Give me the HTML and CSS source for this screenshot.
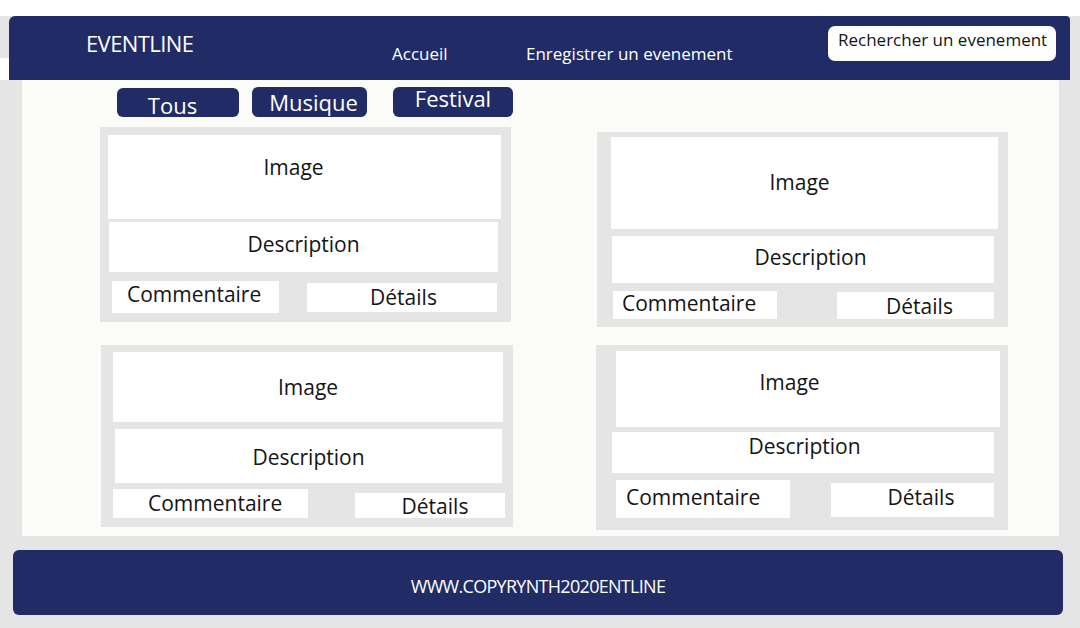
FILE: index.html
```html
<!DOCTYPE html>
<html lang="fr">
<head>
<meta charset="utf-8">
<title>EVENTLINE</title>
<link rel="stylesheet" href="styles.css">
</head>
<body>
<div class="top-strip"></div>
<div class="header-row">
  <div class="header-edge"></div>
  <header class="header">
    <div class="brand">EVENTLINE</div>
    <a class="nav-link nav-home">Accueil</a>
    <a class="nav-link nav-add">Enregistrer un evenement</a>
    <div class="search">Rechercher un evenement</div>
  </header>
  <div class="header-tail"></div>
</div>

<main class="main">
  <div class="filters">
    <button class="chip chip-all">Tous</button>
    <button class="chip chip-music">Musique</button>
    <button class="chip chip-fest">Festival</button>
  </div>

  <div class="grid">
    <article class="card c1">
      <div class="box img">Image</div>
      <div class="box desc">Description</div>
      <div class="actions">
        <div class="box comm">Commentaire</div>
        <div class="box det">Détails</div>
      </div>
    </article>
    <article class="card c2">
      <div class="box img">Image</div>
      <div class="box desc">Description</div>
      <div class="actions">
        <div class="box comm">Commentaire</div>
        <div class="box det">Détails</div>
      </div>
    </article>
    <article class="card c3">
      <div class="box img">Image</div>
      <div class="box desc">Description</div>
      <div class="actions">
        <div class="box comm">Commentaire</div>
        <div class="box det">Détails</div>
      </div>
    </article>
    <article class="card c4">
      <div class="box img">Image</div>
      <div class="box desc">Description</div>
      <div class="actions">
        <div class="box comm">Commentaire</div>
        <div class="box det">Détails</div>
      </div>
    </article>
  </div>
</main>

<div class="footer-wrap">
  <footer class="footer">WWW.COPYRYNTH2020ENTLINE</footer>
</div>
</body>
</html>
```

FILE: styles.css
```css
* { box-sizing: border-box; }

html, body {
  margin: 0;
  padding: 0;
}

body {
  width: 1080px;
  height: 628px;
  overflow: hidden;
  background: #e5e5e5;
  font-family: "Open Sans", "Noto Sans", sans-serif;
  color: #141414;
}

.top-strip {
  height: 16px;
  background: #ffffff;
}

/* ---------- header ---------- */
.header-row {
  display: flex;
  height: 64px;
}

.header-edge {
  width: 9px;
  background: linear-gradient(#e5e5e5 0 42px, #ffffff 42px);
}

.header {
  width: 1061px;
  background: #212b65;
  border-radius: 6px 4px 0 0;
  color: #ffffff;
  display: grid;
  grid-template-columns: 306px 134px 302px 228px;
  align-items: start;
  padding-left: 77px;
}

.header-tail {
  flex: 1;
  background: #e5e5e5;
}

.brand {
  font-size: 22px;
  line-height: 1;
  margin-top: 16px;
  letter-spacing: -0.6px;
}

.nav-link {
  color: #ffffff;
  font-size: 17px;
  line-height: 1;
  margin-top: 29px;
  text-decoration: none;
}

.search {
  margin-top: 10px;
  height: 35px;
  background: #ffffff;
  color: #141414;
  border-radius: 7px;
  font-size: 17px;
  line-height: 1;
  padding: 5px 0 0 10px;
}

/* ---------- main ---------- */
.main {
  margin: 0 21px 0 22px;
  height: 456px;
  background: #fbfbf7;
  padding-top: 7px;
}

.filters {
  display: flex;
  align-items: flex-end;
  height: 30px;
  padding-left: 95px;
}

.chip {
  border: 0;
  margin: 0;
  background: #212b65;
  color: #ffffff;
  font-family: inherit;
  font-size: 22px;
  line-height: 1;
  border-radius: 6px;
  display: flex;
  justify-content: center;
  align-items: flex-start;
  padding: 0;
}

.chip-all {
  width: 122px;
  height: 29px;
  padding: 6px 11px 0 0;
}

.chip-music {
  width: 115px;
  height: 30px;
  margin-left: 13px;
  padding: 4px 0 0 8px;
}

.chip-fest {
  width: 120px;
  height: 30px;
  margin-left: 26px;
  padding: 0;
}

.grid {
  display: grid;
  grid-template-columns: 413px 413px;
  column-gap: 84px;
  row-gap: 18px;
  align-items: start;
  margin-top: 10px;
  padding-left: 78px;
}

.card {
  background: #e5e5e5;
  display: flex;
  flex-direction: column;
  align-items: flex-start;
}

.box {
  background: #ffffff;
  font-size: 21px;
  line-height: 1.2;
  display: flex;
  align-items: center;
  justify-content: center;
  white-space: nowrap;
}

.actions {
  display: flex;
  align-items: flex-start;
}

.comm {
  justify-content: flex-start;
}

/* card 1 */
.c1 { width: 411px; height: 195px; padding-top: 8px; }
.c1 .img { margin-left: 8px; width: 393px; height: 84px; padding: 0 22px 18px 0; }
.c1 .desc { margin: 3px 0 0 9px; width: 389px; height: 50px; padding-bottom: 4px; }
.c1 .actions { margin-top: 9px; }
.c1 .comm { margin-left: 12px; width: 167px; height: 32px; padding: 0 0 4px 15px; }
.c1 .det { margin: 2px 0 0 28px; width: 190px; height: 29px; padding-left: 3px; }

/* card 2 */
.c2 { width: 411px; height: 195px; margin-top: 5px; padding-top: 5px; }
.c2 .img { margin-left: 14px; width: 387px; height: 92px; padding-right: 10px; }
.c2 .desc { margin: 7px 0 0 15px; width: 382px; height: 47px; padding: 0 0 3px 15px; }
.c2 .actions { margin-top: 8px; }
.c2 .comm { margin-left: 16px; width: 164px; height: 28px; padding: 0 0 2px 9px; }
.c2 .det { margin: 1px 0 0 60px; width: 157px; height: 27px; padding: 3px 0 0 8px; }

/* card 3 */
.c3 { width: 412px; height: 182px; margin-left: 1px; padding-top: 7px; }
.c3 .img { margin-left: 12px; width: 390px; height: 70px; padding-top: 2px; }
.c3 .desc { margin: 7px 0 0 14px; width: 387px; height: 54px; padding-top: 4px; }
.c3 .actions { margin-top: 6px; }
.c3 .comm { margin-left: 12px; width: 195px; height: 29px; padding-left: 35px; }
.c3 .det { margin: 4px 0 0 47px; width: 150px; height: 25px; padding: 3px 0 0 10px; }

/* card 4 */
.c4 { width: 412px; height: 185px; margin-left: -1px; padding-top: 6px; }
.c4 .img { margin-left: 20px; width: 384px; height: 76px; padding: 0 37px 12px 0; }
.c4 .desc { margin: 5px 0 0 16px; width: 382px; height: 41px; padding: 0 0 11px 3px; }
.c4 .actions { margin-top: 7px; }
.c4 .comm { margin-left: 20px; width: 174px; height: 38px; padding: 0 0 2px 10px; }
.c4 .det { margin: 3px 0 0 41px; width: 163px; height: 34px; padding: 0 0 4px 17px; }

/* ---------- footer ---------- */
.footer-wrap {
  padding: 14px 17px 0 13px;
}

.footer {
  height: 65px;
  background: #212b65;
  border-radius: 6px;
  color: #ffffff;
  font-size: 18px;
  letter-spacing: -0.7px;
  display: flex;
  align-items: center;
  justify-content: center;
  padding-top: 6px;
}
```
